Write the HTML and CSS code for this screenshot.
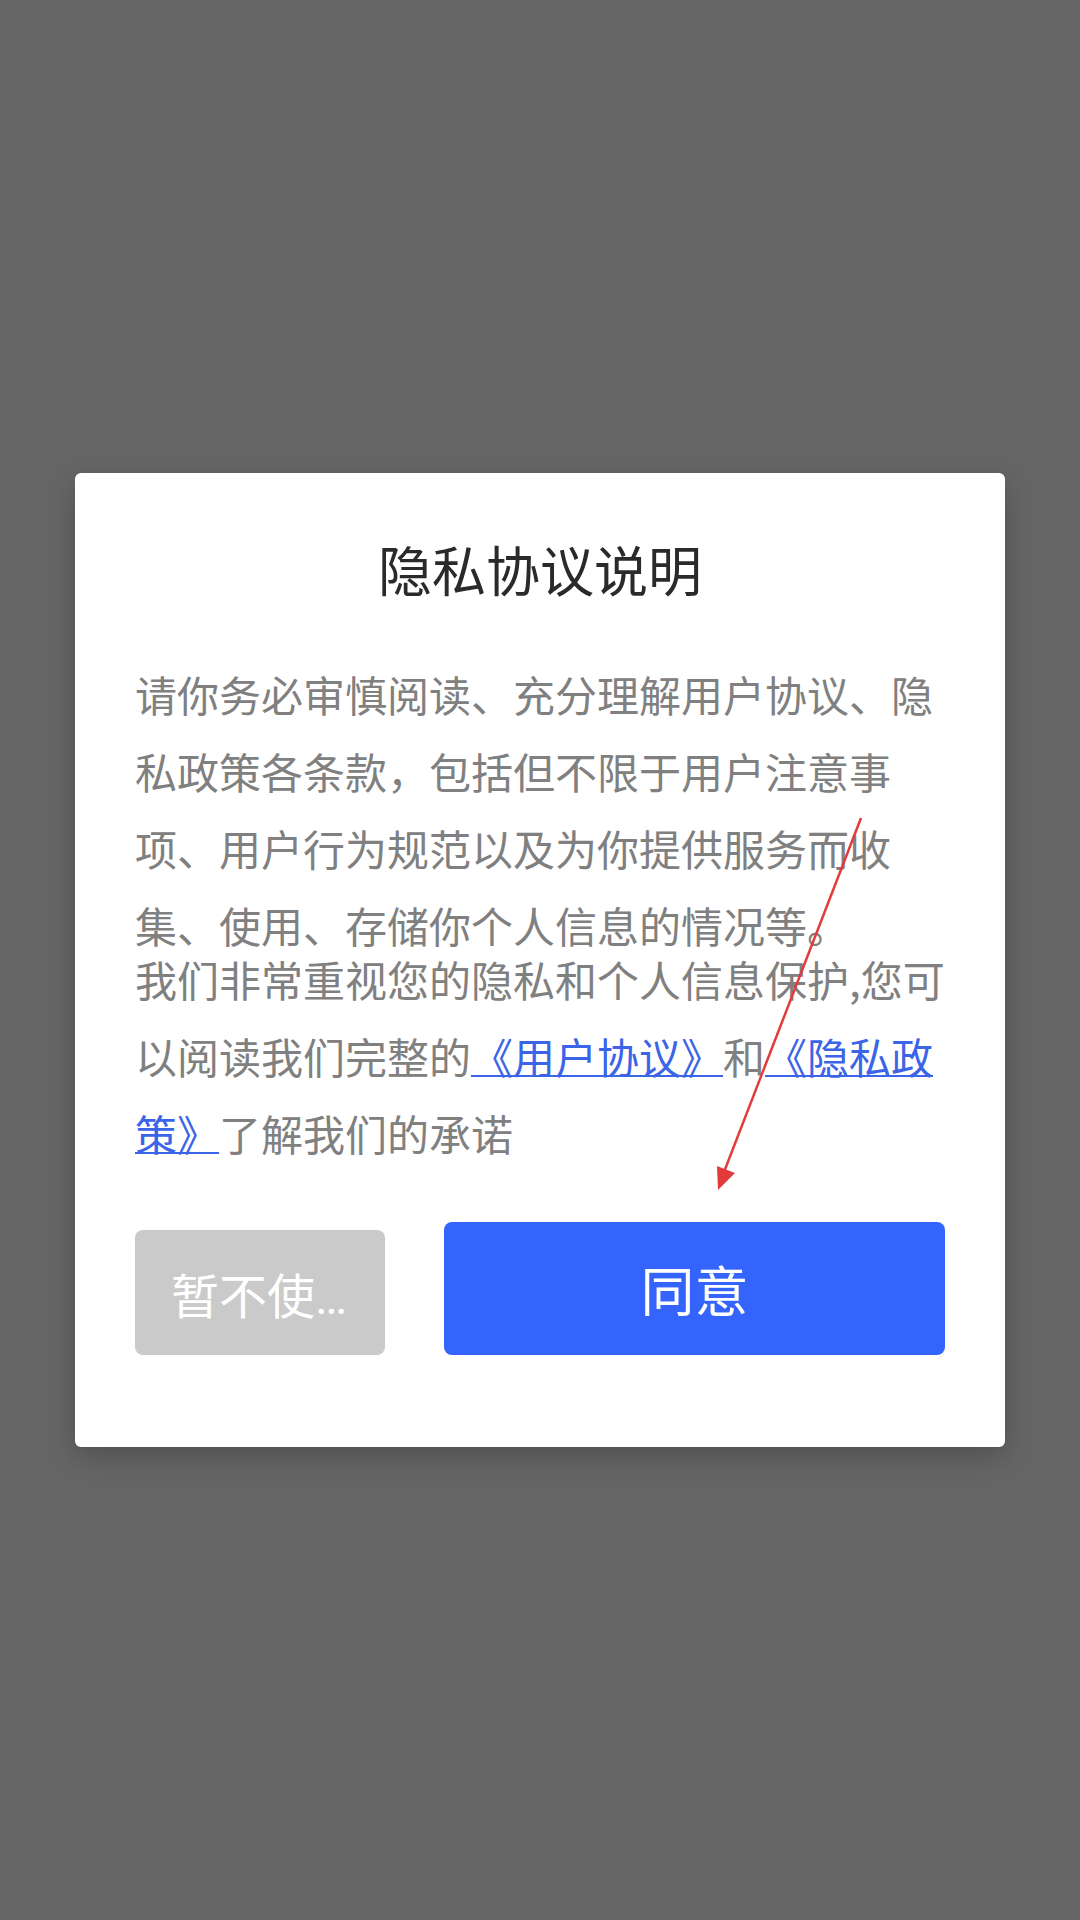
FILE: index.html
```html
<!DOCTYPE html>
<html lang="zh-CN">
<head>
    <meta charset="UTF-8">
    <meta name="viewport" content="width=device-width, initial-scale=1.0">
    <title>隐私协议说明</title>
    <link rel="stylesheet" href="styles.css">
</head>
<body>
    <div class="overlay">
        <div class="dialog">
            <h2 class="dialog-title">隐私协议说明</h2>
            <p class="dialog-text first">请你务必审慎阅读、充分理解用户协议、隐私政策各条款，包括但不限于用户注意事项、用户行为规范以及为你提供服务而收集、使用、存储你个人信息的情况等。</p>
            <p class="dialog-text">我们非常重视您的隐私和个人信息保护,您可以阅读我们完整的<a href="#agreement">《用户协议》</a>和<a href="#privacy">《隐私政策》</a>了解我们的承诺</p>
            <div class="dialog-actions">
                <button class="btn btn-cancel"><span>暂不使用</span></button>
                <button class="btn btn-agree">同意</button>
            </div>
        </div>
    </div>

    <!-- red arrow drawn on top of the screenshot -->
    <svg class="annotation" width="1080" height="1920" viewBox="0 0 1080 1920">
        <line x1="861" y1="818" x2="724" y2="1172" stroke="#e23b3b" stroke-width="2.5" />
        <polygon points="718,1190 735,1173 717,1166" fill="#e23b3b" />
    </svg>
</body>
</html>
```

FILE: styles.css
```css
html, body {
    margin: 0;
    padding: 0;
}

body {
    font-family: "Noto Sans CJK SC", "Noto Sans", sans-serif;
    background-color: #666666;
}

.overlay {
    display: flex;
    align-items: center;
    justify-content: center;
    height: 1920px;
    background-color: #666666;
}

.dialog {
    width: 930px;
    box-sizing: border-box;
    padding: 56px 60px 92px;
    background-color: #fff;
    border-radius: 6px;
    box-shadow: 0 10px 30px rgba(0, 0, 0, 0.22);
}

.dialog-title {
    margin: 0 0 46px;
    font-size: 54px;
    line-height: 80px;
    font-weight: normal;
    color: #2a2a2a;
    text-align: center;
}

.dialog-text {
    margin: 0 -10px 0 0;
    font-size: 42px;
    line-height: 77px;
    color: #808080;
}

.dialog-text.first {
    margin-bottom: -23px;
}

.dialog-text a {
    color: #3b64e8;
    text-decoration: underline;
    text-decoration-thickness: 2px;
}

.dialog-actions {
    display: flex;
    align-items: flex-end;
    gap: 59px;
    margin-top: 51px;
}

.btn {
    border: none;
    border-radius: 8px;
    color: #fff;
    font-family: "Roboto", "Noto Sans CJK SC", sans-serif;
    outline: none;
    cursor: pointer;
}

.btn-cancel {
    width: 250px;
    height: 125px;
    padding: 0 36px;
    background-color: #cacaca;
    font-size: 48px;
}

.btn-cancel span {
    display: block;
    overflow: hidden;
    white-space: nowrap;
    text-overflow: ellipsis;
}

.btn-agree {
    flex: 1;
    height: 133px;
    background-color: #3564fd;
    font-size: 54px;
}

.annotation {
    position: absolute;
    top: 0;
    left: 0;
    pointer-events: none;
}
```
